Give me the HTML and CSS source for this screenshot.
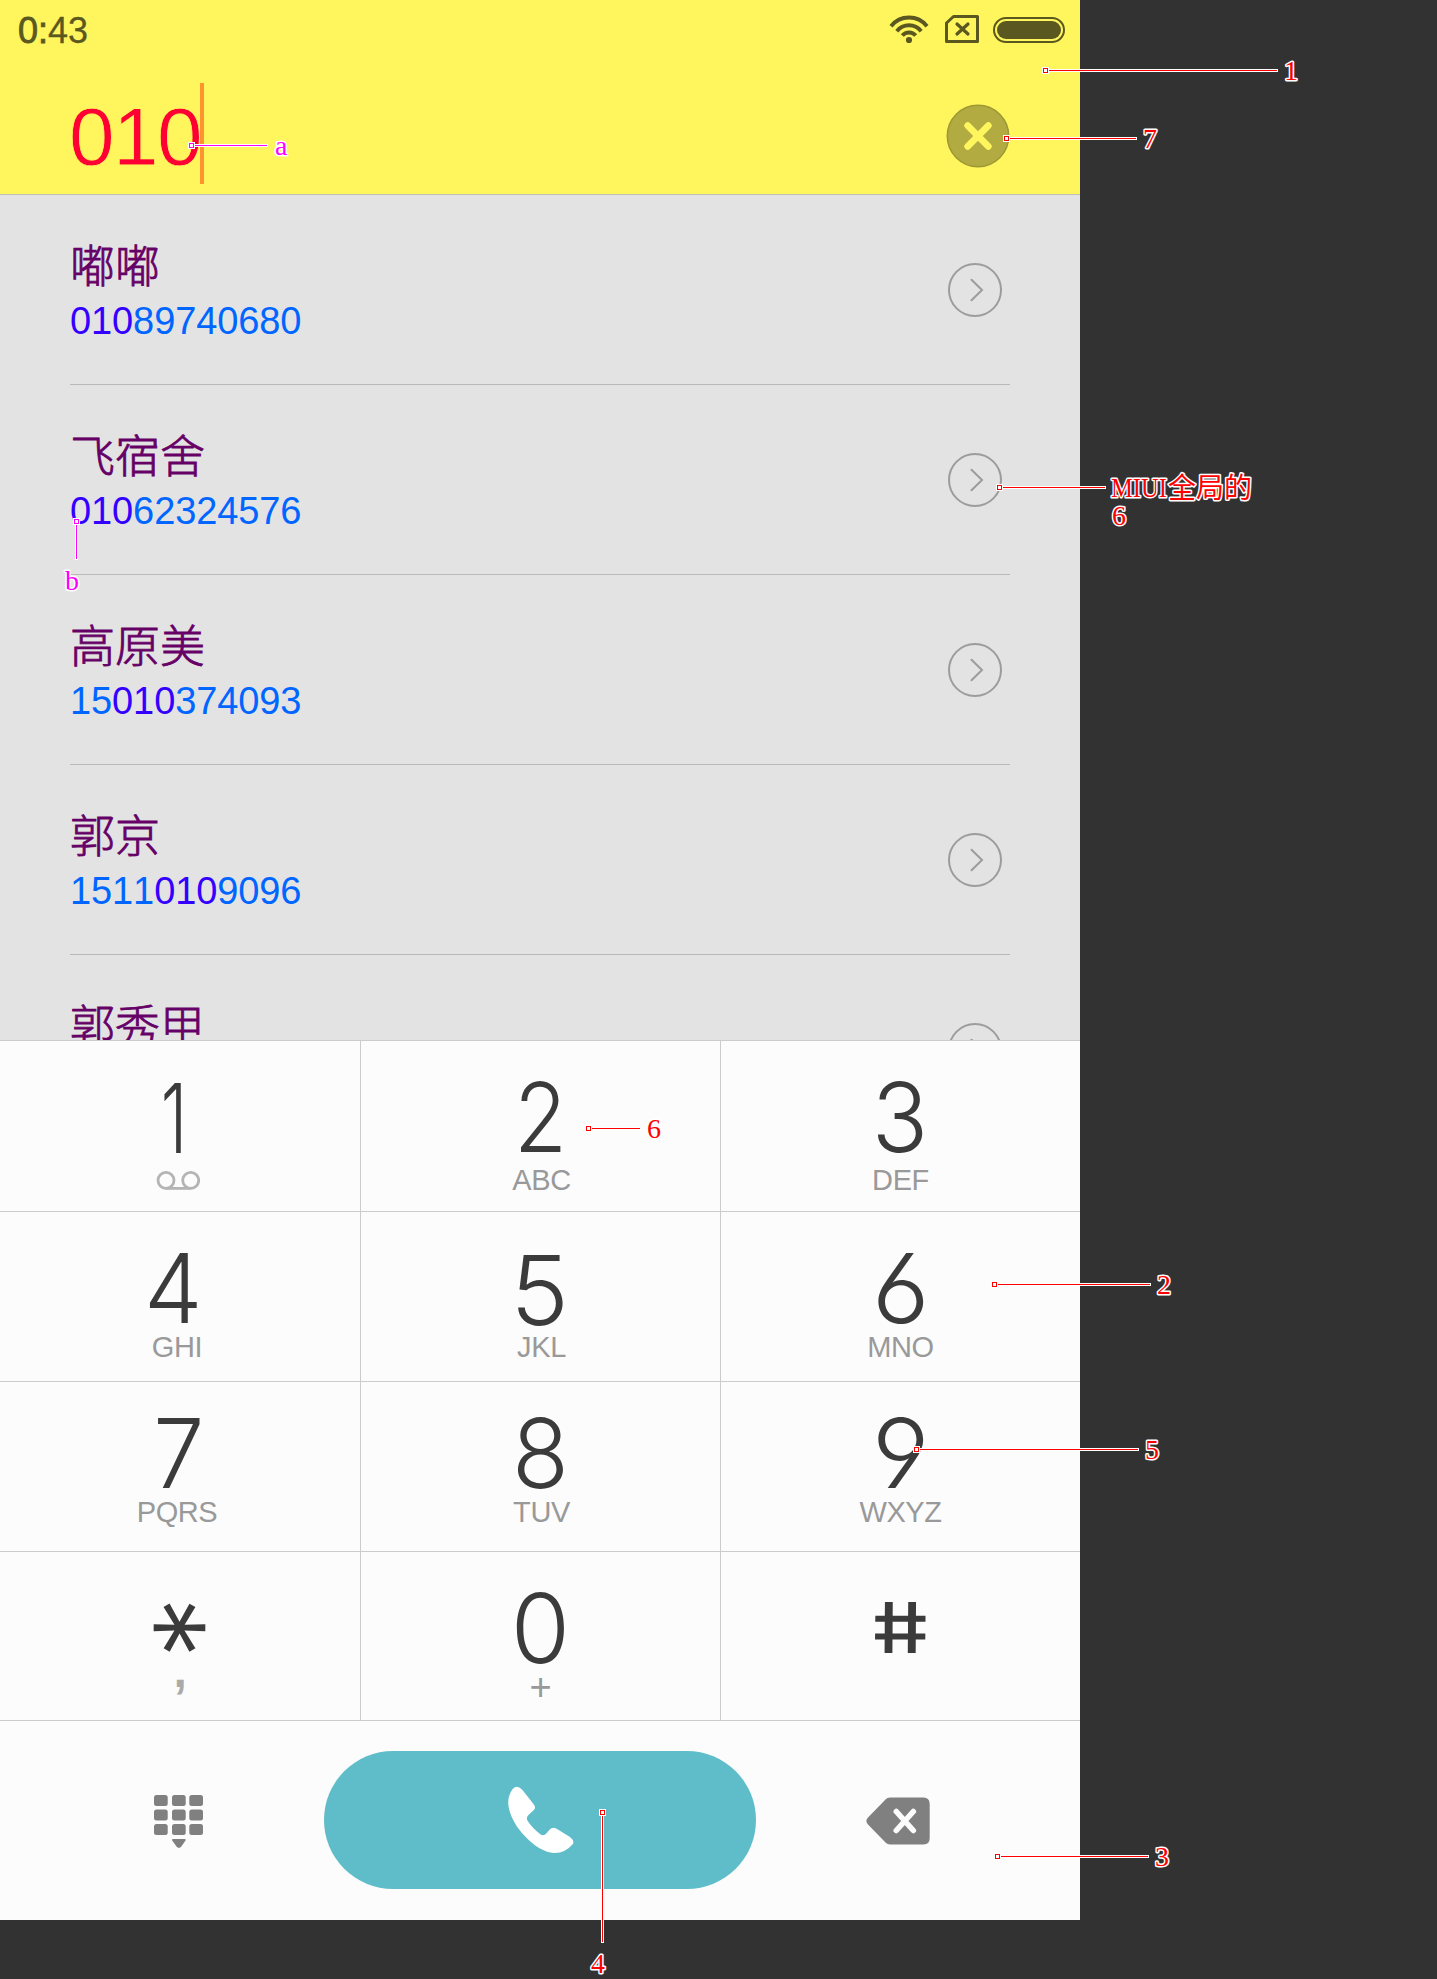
FILE: index.html
```html
<!DOCTYPE html>
<html lang="zh-CN">
<head>
<meta charset="utf-8">
<title>拨号</title>
<link rel="stylesheet" href="styles.css">
</head>
<body>
<div class="board">
  <main class="phone">
    <header class="header">
      <div class="status">
        <span class="time"><span class="hour">0:</span>43</span>
        <svg class="status-icons" width="180" height="34" viewBox="888 12 180 34">
          <g fill="none" stroke="#5a5820" stroke-width="3.9">
            <path d="M891 26.2a23 23 0 0 1 36 0"/>
            <path d="M896.8 31.2a15.6 15.6 0 0 1 24.4 0"/>
            <path d="M902.3 35.6a8.7 8.7 0 0 1 13.4 0"/>
          </g>
          <circle cx="909" cy="40" r="3.1" fill="#5a5820"/>
          <path d="M953.5 16.5H977.5V41.5H946.5V23Z" fill="none" stroke="#5a5820" stroke-width="3" stroke-linejoin="round"/>
          <path d="M957 24l11 10M968 24l-11 10" stroke="#5a5820" stroke-width="3.2" stroke-linecap="round"/>
          <rect x="994" y="18" width="70" height="24" rx="12" fill="none" stroke="#5a5820" stroke-width="2"/>
          <rect x="997" y="21" width="64" height="18" rx="9" fill="#5a5820"/>
        </svg>
      </div>
      <div class="query">
        <span class="digits">010</span><span class="caret"></span>
        <svg class="clear" width="64" height="64" viewBox="-32 -32 64 64">
          <circle r="30.7" fill="#b1ab41" stroke="#9d9833" stroke-width="1.5"/>
          <path d="M-10.3 -10.3L10.3 10.3M10.3 -10.3L-10.3 10.3" stroke="#fff55d" stroke-width="6.8" stroke-linecap="round"/>
        </svg>
      </div>
    </header>

    <ul class="results">
      <li class="row"><div><p class="name">嘟嘟</p><p class="number"><b>010</b>89740680</p></div><svg class="more" viewBox="-28 -28 56 56"><circle r="26"/><path d="M-3.5 -10.3L7 0L-3.5 10.3"/></svg></li>
      <li class="row"><div><p class="name">飞宿舍</p><p class="number"><b>010</b>62324576</p></div><svg class="more" viewBox="-28 -28 56 56"><circle r="26"/><path d="M-3.5 -10.3L7 0L-3.5 10.3"/></svg></li>
      <li class="row"><div><p class="name">高原美</p><p class="number">15<b>010</b>374093</p></div><svg class="more" viewBox="-28 -28 56 56"><circle r="26"/><path d="M-3.5 -10.3L7 0L-3.5 10.3"/></svg></li>
      <li class="row"><div><p class="name">郭京</p><p class="number">1511<b>010</b>9096</p></div><svg class="more" viewBox="-28 -28 56 56"><circle r="26"/><path d="M-3.5 -10.3L7 0L-3.5 10.3"/></svg></li>
      <li class="row"><div><p class="name">郭秀甲</p></div><svg class="more" viewBox="-28 -28 56 56"><circle r="26"/><path d="M-3.5 -10.3L7 0L-3.5 10.3"/></svg></li>
    </ul>

    <section class="pad">
      <div class="key r1 c1"><span class="num one">1</span>
        <svg class="voicemail" width="44" height="30" viewBox="156 1165 44 30" fill="none" stroke="#b4b4b4" stroke-width="2.8"><circle cx="166" cy="1180.3" r="8"/><circle cx="190.7" cy="1180.3" r="8"/><path d="M166 1188.4h24.7"/></svg>
      </div>
      <div class="key r1 c2"><span class="num two">2</span><span class="sub">ABC</span></div>
      <div class="key r1"><span class="num">3</span><span class="sub">DEF</span></div>
      <div class="key r2 c1"><span class="num four">4</span><span class="sub">GHI</span></div>
      <div class="key r2 c2"><span class="num five">5</span><span class="sub">JKL</span></div>
      <div class="key r2"><span class="num six">6</span><span class="sub">MNO</span></div>
      <div class="key r3 c1"><span class="num seven">7</span><span class="sub">PQRS</span></div>
      <div class="key r3 c2"><span class="num">8</span><span class="sub">TUV</span></div>
      <div class="key r3"><span class="num six">9</span><span class="sub">WXYZ</span></div>
      <div class="key r4 c1"><span class="num star">*</span><span class="sub comma">,</span></div>
      <div class="key r4 c2"><span class="num zero">0</span><span class="sub plus">+</span></div>
      <div class="key r4"><span class="num hash">#</span></div>
    </section>

    <footer class="actions">
      <svg width="50" height="54" viewBox="154 1795 50 54" fill="#808080">
        <rect x="154" y="1795" width="13.7" height="11" rx="2.5"/><rect x="172" y="1795" width="13.7" height="11" rx="2.5"/><rect x="189.3" y="1795" width="13.7" height="11" rx="2.5"/>
        <rect x="154" y="1809.5" width="13.7" height="11" rx="2.5"/><rect x="172" y="1809.5" width="13.7" height="11" rx="2.5"/><rect x="189.3" y="1809.5" width="13.7" height="11" rx="2.5"/>
        <rect x="154" y="1824" width="13.7" height="11" rx="2.5"/><rect x="172" y="1824" width="13.7" height="11" rx="2.5"/><rect x="189.3" y="1824" width="13.7" height="11" rx="2.5"/>
        <path d="M173 1839h11.7q1.5 0 .8 1.6l-4.2 6q-2.4 2.6-4.8 0l-4.3-6q-.7-1.6.8-1.6z"/>
      </svg>
      <div class="call">
        <svg width="70" height="70" viewBox="1220 192 210 210" fill="#fff"><path d="M1253 197Q1262 198 1270 208L1303 250Q1311 260 1303 268L1288 281Q1279 289 1285 300Q1298 320 1323 340Q1332 346 1340 338L1352 325Q1360 317 1372 323L1412 348Q1427 360 1420 370Q1396 398 1362 396C1320 392 1275 350 1250 312C1228 276 1216 236 1240 204Q1246 197 1253 197Z"/></svg>
      </div>
      <svg class="erase" width="66" height="50" viewBox="865 1796 66 50"><path d="M890 1797.5H923.5Q929.7 1797.5 929.7 1804V1838Q929.7 1844.5 923.5 1844.5H890Q887.3 1844.5 885.5 1842.5L868 1824.5Q864.7 1821 868 1817.5L885.5 1799.5Q887.3 1797.5 890 1797.5Z" fill="#808080"/><path d="M896.3 1811.5L913.3 1830.5M913.3 1811.5L896.3 1830.5" stroke="#fcfcfc" stroke-width="5.6" stroke-linecap="round"/></svg>
    </footer>
  </main>

  <svg class="notes" width="1437" height="1979" viewBox="0 0 1437 1979">
    <g class="halo">
      <path d="M1045 70.5H1278M1006 138.5H1137M999 487.5H1106M994 1284.5H1151M916 1449.5H1139M997 1856.5H1149M588 1128.5H641M191 145.5H268M602.5 1812V1943M76.5 521V560"/>
    </g>
    <g class="red">
      <path d="M1045 70.5H1277M1006 138.5H1136M999 487.5H1105M994 1284.5H1150M916 1449.5H1138M997 1856.5H1148M588 1128.5H640M602.5 1812V1942"/>
    </g>
    <g class="pink"><path d="M191 145.5H267M76.5 521V559"/></g>
    <g class="halo-box">
      <rect x="1042" y="67" width="7" height="7"/><rect x="1003" y="135" width="7" height="7"/><rect x="996" y="484" width="7" height="7"/><rect x="991" y="1281" width="7" height="7"/><rect x="913" y="1446" width="7" height="7"/><rect x="994" y="1853" width="7" height="7"/><rect x="585" y="1125" width="7" height="7"/><rect x="599" y="1809" width="7" height="7"/><rect x="188" y="142" width="7" height="7"/><rect x="73" y="518" width="7" height="7"/>
    </g>
    <g class="red">
      <rect x="1043.5" y="68.5" width="4" height="4"/><rect x="1004.5" y="136.5" width="4" height="4"/><rect x="997.5" y="485.5" width="4" height="4"/><rect x="992.5" y="1282.5" width="4" height="4"/><rect x="914.5" y="1447.5" width="4" height="4"/><rect x="995.5" y="1854.5" width="4" height="4"/><rect x="586.5" y="1126.5" width="4" height="4"/><rect x="600.5" y="1810.5" width="4" height="4"/>
    </g>
    <g class="pink"><rect x="189.5" y="143.5" width="4" height="4"/><rect x="74.5" y="519.5" width="4" height="4"/></g>
    <g class="label">
      <text x="1284" y="80">1</text>
      <text x="1143" y="148">7</text>
      <text x="1111" y="497" textLength="56" lengthAdjust="spacingAndGlyphs">MIUI</text>
      <text x="1168" y="498">全局的</text>
      <text x="1112" y="525">6</text>
      <text x="1157" y="1294">2</text>
      <text x="1145" y="1459">5</text>
      <text x="1155" y="1866">3</text>
      <text x="591" y="1973">4</text>
      <text x="647" y="1138">6</text>
      <text class="m" x="275" y="155">a</text>
      <text class="m" x="65" y="590">b</text>
    </g>
  </svg>
</div>
</body>
</html>
```
FILE: styles.css
```css
* { box-sizing: border-box; margin: 0; padding: 0; }
body {
  background: #323232;
  font-family: "Liberation Sans", "Noto Sans CJK SC", sans-serif;
  font-kerning: none;
}
.board { position: relative; width: 1437px; height: 1979px; overflow: hidden; }
.phone { width: 1080px; height: 1920px; display: flex; flex-direction: column; background: #fcfcfc; }

.header { height: 195px; background: #fff55d; border-bottom: 1px solid #bdbdb9; flex: none; }
.status { height: 60px; display: flex; justify-content: space-between; padding: 10px 12px 0 18px; color: #5a5820; }
.time { font-size: 36px; line-height: 41px; -webkit-text-stroke: .3px #5a5820; }
.hour { -webkit-text-stroke-width: .8px; }
.status-icons { margin-top: 2px; }
.query { display: flex; align-items: center; height: 134px; padding: 14px 70px 0 69px; }
.digits { font-size: 82px; line-height: 92px; color: #ff0033; width: 131px; letter-spacing: -1.6px; padding-top: 5px; -webkit-text-stroke: .8px #fff55d; }
.caret { width: 4px; height: 101px; background: #ff932f; margin-top: -1px; }
.clear { margin-left: auto; margin-top: 3px; }

.results { list-style: none; height: 845px; overflow: hidden; background: #e3e3e3; padding: 0 70px; flex: none; }
.row { height: 190px; border-bottom: 1px solid #b9b9b9; display: flex; justify-content: space-between; padding-top: 39px; }
.name { font-family: "Noto Sans CJK SC", sans-serif; font-weight: 300; font-size: 45px; line-height: 60px; color: #660066; -webkit-text-stroke: .8px #660066; }
.number { font-size: 38px; line-height: 44px; color: #0066ff; margin-top: 5px; letter-spacing: -.1px; }
.number b { font-weight: 400; color: #3300ff; }
.more { width: 56px; height: 56px; margin: 28px 7px 0 0; fill: none; stroke: #9c9c9c; stroke-width: 2; stroke-linecap: round; }

.pad { height: 681px; flex: none; display: grid; grid-template-columns: 361px 360px 359px; grid-template-rows: 171px 170px 170px 169px; border-top: 1px solid #ccc; }
.key { display: flex; flex-direction: column; align-items: center; border-bottom: 1px solid #ccc; }
.c1, .c2 { border-right: 1px solid #ccc; }
.r1 { padding-top: 40px; gap: 12px; }
.r2 { padding-top: 40px; gap: 8px; }
.r3 { padding-top: 35px; gap: 8px; }
.r4 { padding-top: 40px; gap: 8px; }
.num { font-family: Inter, sans-serif; font-weight: 260; font-size: 96px; line-height: 72px; height: 72px; color: #3b3b3b; transform: scaleX(.97); font-feature-settings: "cv03", "cv04"; }
.sub { font-size: 29px; line-height: 30px; height: 30px; color: #999; letter-spacing: -.4px; }
.c1 .sub { margin-left: -6px; }
.c2 .sub { margin-left: 2px; }
.voicemail { margin-left: -4px; }
.one { transform: translate(-6px, 1px) scaleX(.7); }
.two { transform: scaleX(.9); }
.four { transform: translateX(-7px) scaleX(.97); }
.five { transform: translateX(-1px) scaleX(1.03); padding-top: 2px; }
.six { transform: scaleX(1.04); }
.seven { transform: translateX(-1px) scaleX(.95); }
.zero { transform: scaleX(1); }
.star { font-weight: 300; font-size: 126px; transform: translate(-10px, 17px) rotate(30deg); }
.hash { font-weight: 500; transform: scaleX(1.3) skewX(9deg); font-size: 70px; }
.c1 .comma { font-weight: 700; font-size: 48px; color: #aaa; margin-left: 0; transform: translateY(-16px); }
.c2 .plus { font-size: 38px; margin-left: 0; }

.actions { flex: 1; display: grid; grid-template-columns: 324px 432px 324px; align-items: center; }
.actions > svg { margin-left: 154px; margin-top: 2px; }
.actions > .erase { margin-left: 109px; margin-top: 0; }
.call { height: 138px; margin-top: -2px; border-radius: 69px; background: #5fbdc9; display: flex; align-items: center; justify-content: center; padding-left: 1px; }

.notes { position: absolute; left: 0; top: 0; pointer-events: none; }
.halo path, .halo-box rect, .red path, .red rect, .pink path, .pink rect { shape-rendering: crispEdges; }
.halo path { stroke: #fff; stroke-width: 3; }
.halo-box rect { fill: #fff; }
.red path, .red rect { stroke: #f00; fill: none; stroke-width: 1; }
.pink path, .pink rect { stroke: #f0f; fill: none; stroke-width: 1; }
.label text { font-family: "Liberation Serif", "Noto Sans CJK SC", serif; font-size: 28px; fill: #f00; stroke: #fff; stroke-width: 3px; stroke-linejoin: round; paint-order: stroke; }
.label .m { fill: #f0f; }
```
